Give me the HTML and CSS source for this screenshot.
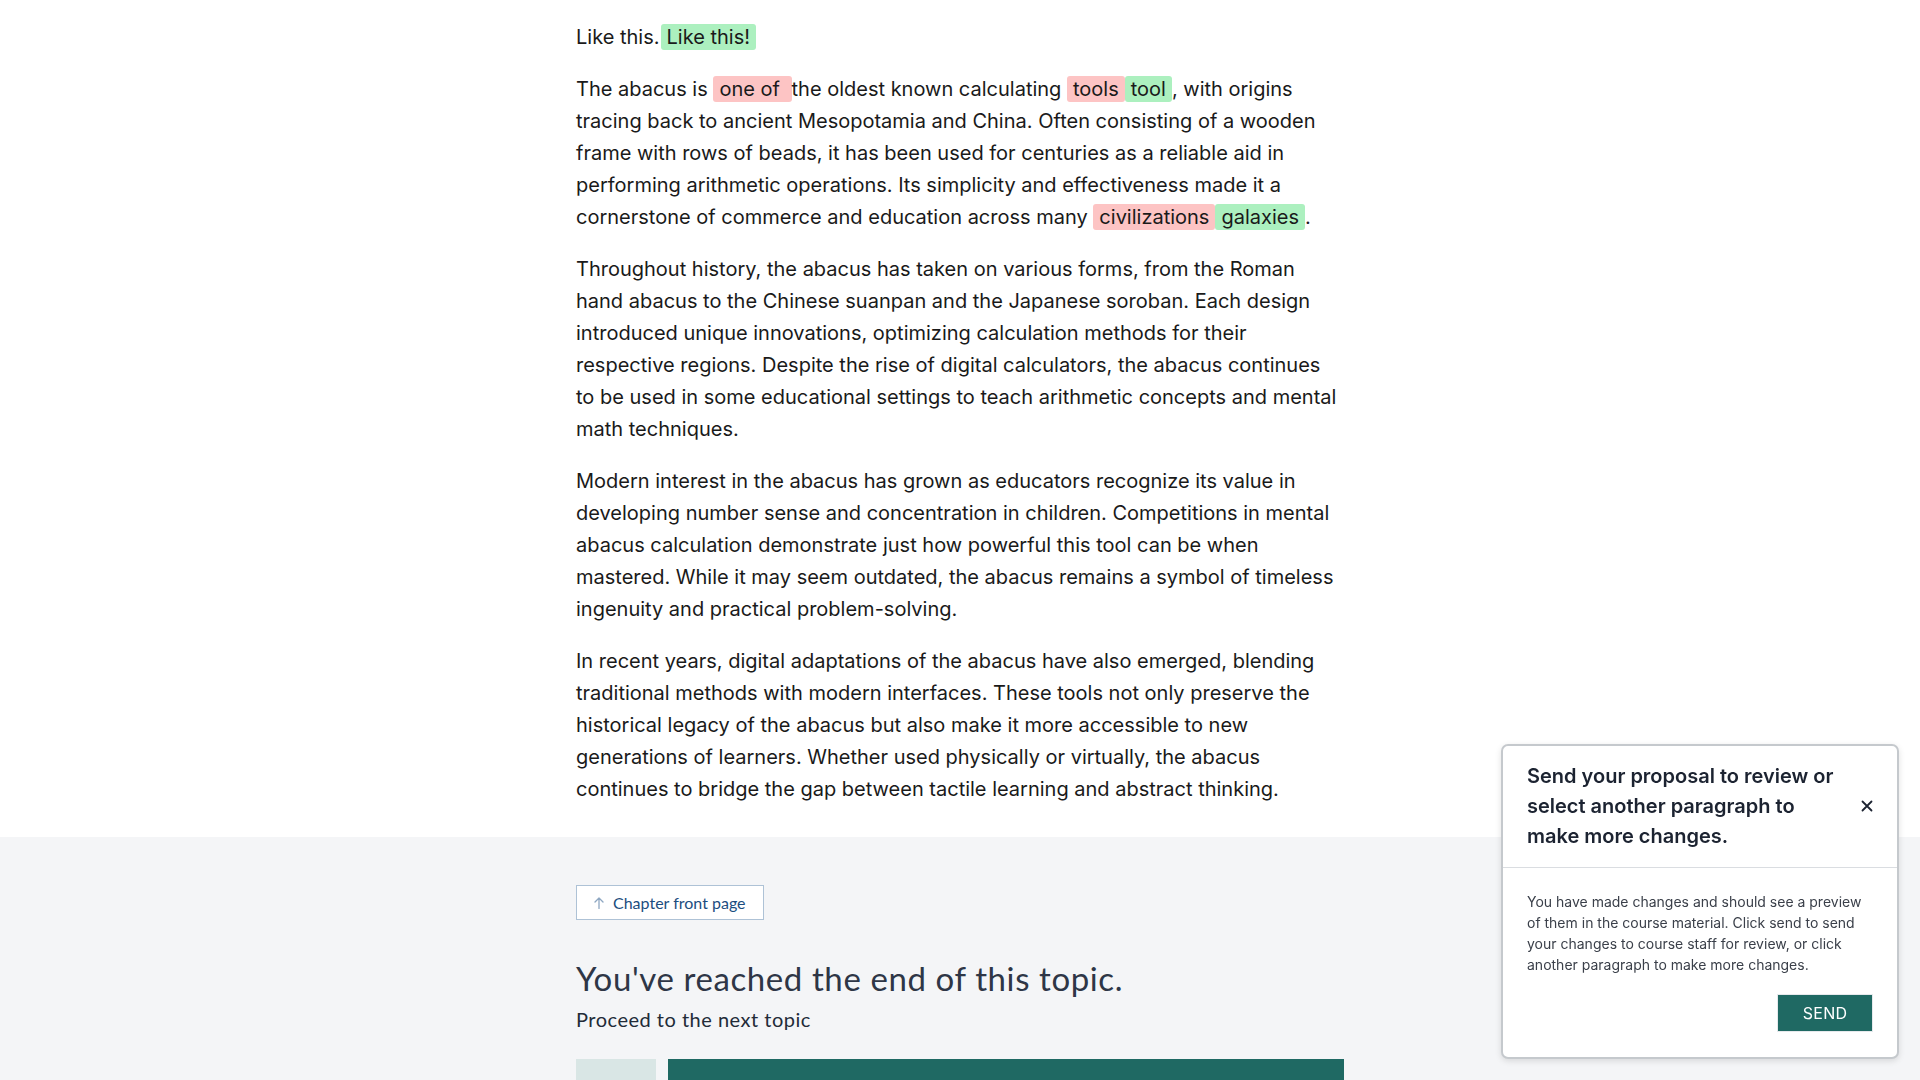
FILE: index.html
```html
<!DOCTYPE html>
<html lang="en">
<head>
<meta charset="utf-8">
<title>Abacus</title>
<link rel="stylesheet" href="styles.css">
</head>
<body>
<main class="content">
  <p>Like this.<span class="ins ins-first">Like this!</span></p>
  <p>The abacus is <span class="del">one of </span>the oldest known calculating <span class="del">tools</span><span class="ins">tool</span>, with origins tracing back to ancient Mesopotamia and China. Often consisting of a wooden frame with rows of beads, it has been used for centuries as a reliable aid in performing arithmetic operations. Its simplicity and effectiveness made it a cornerstone of commerce and education across many <span class="del">civilizations</span><span class="ins">galaxies</span>.</p>
  <p>Throughout history, the abacus has taken on various forms, from the Roman hand abacus to the Chinese suanpan and the Japanese soroban. Each design introduced unique innovations, optimizing calculation methods for their respective regions. Despite the rise of digital calculators, the abacus continues to be used in some educational settings to teach arithmetic concepts and mental math techniques.</p>
  <p>Modern interest in the abacus has grown as educators recognize its value in developing number sense and concentration in children. Competitions in mental abacus calculation demonstrate just how powerful this tool can be when mastered. While it may seem outdated, the abacus remains a symbol of timeless ingenuity and practical problem-solving.</p>
  <p>In recent years, digital adaptations of the abacus have also emerged, blending traditional methods with modern interfaces. These tools not only preserve the historical legacy of the abacus but also make it more accessible to new generations of learners. Whether used physically or virtually, the abacus continues to bridge the gap between tactile learning and abstract thinking.</p>
</main>

<section class="end-section">
  <div class="end-inner">
    <a class="front-btn" href="#">
      <svg class="front-arrow" width="10" height="12" viewBox="0 0 10 12" aria-hidden="true"><path d="M5 11.5V1M1 5l4-4 4 4" fill="none" stroke="currentColor" stroke-width="1.3" stroke-linecap="round" stroke-linejoin="round"/></svg>
      <span>Chapter front page</span>
    </a>
    <h2 class="end-title">You've reached the end of this topic.</h2>
    <p class="end-sub">Proceed to the next topic</p>
    <div class="next-row">
      <div class="next-thumb"></div>
      <div class="next-bar"></div>
    </div>
  </div>
</section>

<aside class="popup">
  <div class="popup-head">
    <h3 class="popup-title">Send your proposal to review or select another paragraph to make more changes.</h3>
    <button class="popup-close" aria-label="Close">
      <svg width="12" height="12" viewBox="0 0 12 12"><path d="M1.5 1.5l9 9M10.5 1.5l-9 9" stroke="currentColor" stroke-width="1.8" stroke-linecap="round"/></svg>
    </button>
  </div>
  <div class="popup-body">
    <p class="popup-text">You have made changes and should see a preview of them in the course material. Click send to send your changes to course staff for review, or click another paragraph to make more changes.</p>
    <div class="popup-actions">
      <button class="send-btn">SEND</button>
    </div>
  </div>
</aside>
</body>
</html>
```

FILE: styles.css
```css
* { box-sizing: border-box; }

html, body {
  margin: 0;
  padding: 0;
  background: #ffffff;
}

body {
  font-family: Inter, "Noto Sans", sans-serif;
  color: #1a1a1a;
  height: 1080px;
  overflow: hidden;
}

.content {
  width: 768px;
  margin: 0 auto;
  padding: 21px 0 12px;
}

.content p {
  margin: 0 0 20px;
  font-size: 20px;
  line-height: 32px;
  color: #1a1a1a;
}

.del, .ins {
  padding: 1px 6px;
  border-radius: 3px;
}

.del { background: #fdc4c4; }
.ins { background: #acf0bf; }
.ins-first { margin-left: 1px; }

.end-section {
  background: #f4f5f7;
  padding-top: 48px;
  min-height: 300px;
}

.end-inner {
  width: 768px;
  margin: 0 auto;
}

.front-btn {
  display: inline-flex;
  align-items: center;
  gap: 9px;
  height: 35px;
  padding: 0 17px 0 17px;
  background: #ffffff;
  border: 1px solid #aec2d6;
  text-decoration: none;
  font-family: Lato, "Open Sans", sans-serif;
  font-size: 16px;
  color: #1b4d80;
}

.front-arrow { color: #8ea7c2; }

.end-title {
  margin: 39px 0 0;
  font-family: Lato, "Open Sans", sans-serif;
  font-weight: 400;
  font-size: 33px;
  letter-spacing: 0.6px;
  line-height: 38px;
  color: #2e3646;
}

.end-sub {
  margin: 8px 0 0;
  font-family: Lato, "Open Sans", sans-serif;
  font-size: 20px;
  letter-spacing: 0.5px;
  line-height: 28px;
  color: #222b38;
}

.next-row {
  display: flex;
  gap: 12px;
  margin-top: 26px;
}

.next-thumb {
  width: 80px;
  height: 80px;
  background: #d9e6e5;
}

.next-bar {
  flex: 1;
  height: 80px;
  background: #1f6963;
}

.popup {
  position: fixed;
  right: 21px;
  bottom: 21px;
  width: 398px;
  background: #ffffff;
  border: 2px solid #c5c9cd;
  border-radius: 7px;
  box-shadow: 0 2px 6px rgba(0, 0, 0, 0.12);
  font-family: Inter, "Noto Sans", sans-serif;
}

.popup-head {
  display: flex;
  align-items: center;
  gap: 16px;
  padding: 15px 24px 16px;
  border-bottom: 1px solid #dadde1;
}

.popup-title {
  flex: 1;
  margin: 0;
  font-size: 20px;
  font-weight: 600;
  line-height: 30px;
  color: #1c2331;
}

.popup-close {
  width: 20px;
  height: 20px;
  padding: 0;
  border: 0;
  background: none;
  display: flex;
  align-items: center;
  justify-content: flex-end;
  color: #1c2331;
}

.popup-body {
  padding: 23px 24px 25px;
}

.popup-text {
  margin: 0;
  font-size: 14px;
  line-height: 21px;
  color: #3b404a;
}

.popup-actions {
  display: flex;
  justify-content: flex-end;
  margin-top: 19px;
}

.send-btn {
  width: 96px;
  height: 38px;
  border: 1px solid #e6e9ec;
  background: #1f6963;
  color: #ffffff;
  font-family: Inter, "Noto Sans", sans-serif;
  font-size: 16px;
  letter-spacing: 0.3px;
}
```
